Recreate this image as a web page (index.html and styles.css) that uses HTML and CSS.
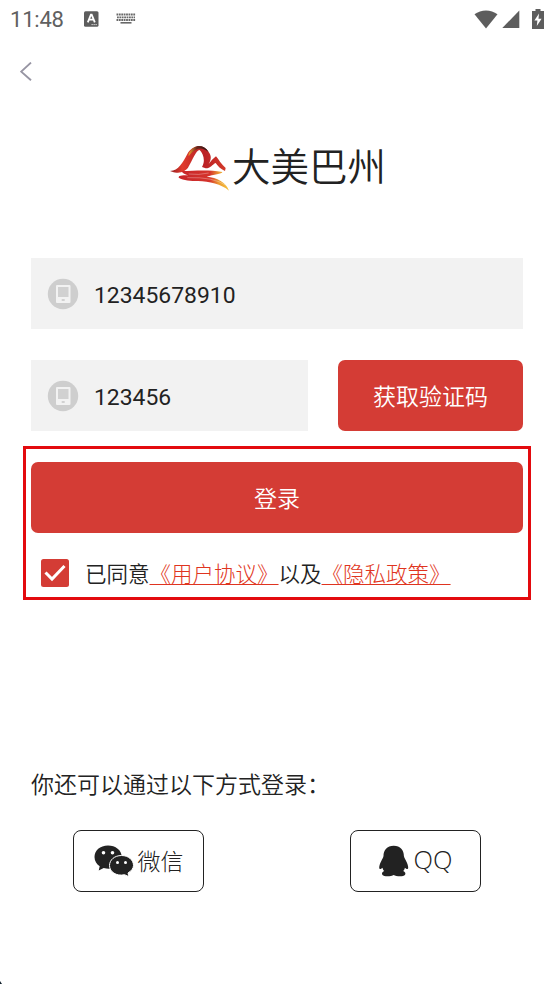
FILE: index.html
```html
<!DOCTYPE html>
<html lang="zh-CN">
<head>
<meta charset="utf-8">
<title>登录</title>
<link rel="stylesheet" href="styles.css">
</head>
<body>
<main class="screen">
  <header class="status">
    <span class="clock">11:48</span>
    <svg class="ime" width="15" height="16" viewBox="0 0 15 16"><rect y="0.3" width="14.5" height="15.4" rx="1.5" fill="#5d5d5d"/><path d="M3.8 11.3 6.9 3.7h.8l3.1 7.6M5 8.7h4.5" fill="none" stroke="#fff" stroke-width="1.8"/><path d="M7.5 13.6h5.5" stroke="#ddd" stroke-dasharray="1.3 .7"/></svg>
    <svg class="keyboard" width="20" height="12" viewBox="0 0 20 12" fill="none" stroke="#686868"><path d="M.5 1.5h19" stroke-width="1.8" stroke-dasharray="1.8 .6"/><path d="M1 4.3h18" stroke-width="1.8" stroke-dasharray="1.8 .6"/><path d="M.5 7h19" stroke-width="1.8" stroke-dasharray="1.8 .6"/><path d="M4.5 9.8h11" stroke-width="1.6"/></svg>
    <span class="spacer"></span>
    <svg class="wifi" width="24" height="19" viewBox="0 0 24 19"><path d="M.5 4.3C7-.8 17-.8 23.5 4.3L12 18.5Z" fill="#5d5d5d"/></svg>
    <svg class="signal" width="18" height="18" viewBox="0 0 18 18"><path d="M17.3.5V18H.3Z" fill="#5d5d5d"/></svg>
    <svg class="battery" width="12" height="20" viewBox="0 0 12 20"><path d="M3.5 0h5v2H12v18H0V2h3.5Z" fill="#5d5d5d"/><path d="M7 4.5 2.4 11.5h3L4.8 17l4.8-7.3H6.5Z" fill="#fff"/></svg>
  </header>
  <nav class="nav"><svg width="12" height="20" viewBox="0 0 12 20"><path d="M11 .6 1.200 9.600 11 18.300" fill="none" stroke="#9795a3" stroke-width="1.9"/></svg></nav>

  <div class="brand">
    <svg class="mountain" width="60" height="47" viewBox="30 29 180 141">
      <defs>
        <linearGradient id="ridge" x1="0" x2="1"><stop offset="0" stop-color="#8f1d20"/><stop offset=".22" stop-color="#e23a2d"/><stop offset=".4" stop-color="#c92e29"/><stop offset=".62" stop-color="#bb2025"/><stop offset="1" stop-color="#d33a2a"/></linearGradient>
        <linearGradient id="river" x1="0" x2="1"><stop offset="0" stop-color="#c6242a"/><stop offset=".62" stop-color="#d5342c"/><stop offset=".8" stop-color="#ec9b31"/><stop offset="1" stop-color="#f5c43b"/></linearGradient>
        <linearGradient id="gold" x1="0" x2="1"><stop offset="0" stop-color="#f1a22d"/><stop offset=".4" stop-color="#6d271d"/><stop offset="1" stop-color="#241514"/></linearGradient>
      </defs>
      <path d="M30 107C56 106 68 82 82 56 95 32 128 22 146 50 158 66 150 78 146 86 152 78 160 69 168 63 176 72 184 88 197 98L195 107C181 101 174 92 167 83 157 87 152 99 137 99L126 95C137 75 130 56 119 44 107 46 99 72 84 97 74 112 49 114 41 111Z" fill="url(#ridge)"/>
      <path d="M86 55C100 27 130 24 146 50 132 39 121 36 108 43 98 47 91 56 86 63Z" fill="url(#gold)"/>
      <path d="M66 107C101 107 143 102 187 110 187 116 160 118 140 124 170 126 200 142 207 166 184 146 148 138 114 137 92 137 71 136 56 127 56 121 62 120 86 120 74 117 66 113 66 107Z" fill="url(#river)"/>
      <path d="M82 127Q160 124 200 151M86 116Q116 120 146 113" fill="none" stroke="#fff" stroke-width="1.5" opacity=".6"/>
    </svg>
    <h1 class="brand-name">大美巴州</h1>
  </div>

  <form class="form">
    <div class="field">
      <svg class="device" width="32" height="32" viewBox="0 0 32 32"><circle cx="16" cy="16" r="15.2" fill="#cecece"/><rect x="9" y="7" width="14.5" height="18" rx="1" fill="#f2f2f2"/><path d="M11 9h10.5v10H11Z" fill="#d1d1d1"/><path d="M14.7 22h3" stroke="#c6c6c6" stroke-width="1.5"/></svg>
      <span class="digits">12345678910</span>
    </div>
    <div class="code-row">
      <div class="field">
        <svg class="device" width="32" height="32" viewBox="0 0 32 32"><circle cx="16" cy="16" r="15.2" fill="#cecece"/><rect x="9" y="7" width="14.5" height="18" rx="1" fill="#f2f2f2"/><path d="M11 9h10.5v10H11Z" fill="#d1d1d1"/><path d="M14.7 22h3" stroke="#c6c6c6" stroke-width="1.5"/></svg>
        <span class="digits">123456</span>
      </div>
      <button class="btn" type="button">获取验证码</button>
    </div>
    <section class="frame">
      <button class="btn" type="button">登录</button>
      <div class="agree">
        <svg class="check" width="28" height="28" viewBox="0 0 28 28"><rect width="28" height="28" rx="2.5" fill="#d43c35"/><path d="M4.5 13.5 11 20 23.5 7" fill="none" stroke="#fff" stroke-width="3"/></svg>
        <p class="terms">已同意<a class="link">《用户协议》</a>以及<a class="link">《隐私政策》</a></p>
      </div>
    </section>
  </form>

  <section class="other">
    <p class="other-title">你还可以通过以下方式登录：</p>
    <div class="providers">
      <button class="provider" type="button">
        <svg class="wechat" width="40" height="32" viewBox="0 0 40 32"><path d="M14 .5C6 .5.5 5.5.5 12c0 4 2 7 5.2 9.2L4.7 25.5l5-2.5c10 2.5 18-2.5 18-11C27.700 5 21.500.5 14 .5Z" fill="#222"/><path d="M27.500 10.500c-7 0-12 4.500-12 10 0 6.500 7 11 15 9.200l4.500 2-1-3.700c3.200-2 5.500-4.500 5.500-7.500 0-5.500-5-10-12-10Z" fill="#222" stroke="#fff"/><g fill="#fff"><circle cx="9.500" cy="7.800" r="1.800"/><circle cx="18.500" cy="7.800" r="1.800"/><circle cx="23.500" cy="17.500" r="1.500"/><circle cx="31.500" cy="17.500" r="1.500"/></g></svg>
        <span class="wechat-name">微信</span>
      </button>
      <button class="provider" type="button">
        <svg class="penguin" width="30" height="32" viewBox="0 0 30 32"><path d="M14.700.7C8 .7 4.500 5 4.500 11c-.2 2-1.500 3-2.200 5C.5 19.500-.5 23.500.8 24c1 .3 2-.8 2.700-1.300.3 1.500.9 2.500 1.800 3.300C3 27 2.500 28.500 3.500 30c1.500 2 9 1.500 11.200 0 2.200 1.500 9.700 2 11.200 0 1-1.500.5-3-1.800-4 .9-.8 1.500-1.800 1.800-3.300.7.500 1.700 1.600 2.700 1.300 1.300-.5.300-4.500-1.500-8-.7-2-2-3-2.200-5 0-6-3.500-10.300-10.200-10.300Z" fill="#222"/></svg>
        <span class="qq-name">QQ</span>
      </button>
    </div>
  </section>
  <div class="corner"></div>
</main>
</body>
</html>
```
FILE: styles.css
```css
* { box-sizing: border-box; }

body {
  margin: 0;
  background: #fff;
  color: #222;
  font-family: Roboto, "Noto Sans CJK SC", sans-serif;
}

svg { display: block; flex: none; }

.screen {
  display: flex;
  flex-direction: column;
  height: 984px;
  overflow: hidden;
  background: #fff;
}

.status {
  display: flex;
  align-items: center;
  height: 38px;
  padding: 0 10px;
}

.clock {
  width: 74px;
  padding-top: 1px;
  color: #606060;
  font-size: 22px;
  line-height: 37px;
  letter-spacing: -0.2px;
}

.keyboard { margin-left: 17px; }
.spacer { flex: 1; }
.signal { margin-left: 4px; }
.battery { margin-left: 12px; }

.nav {
  height: 107px;
  padding: 24px 20px;
}

.brand {
  display: flex;
  height: 113px;
  padding-left: 170px;
}

.brand-name {
  margin: -5px 0 0 2px;
  font-size: 38.5px;
  font-weight: 350;
  line-height: 56px;
}

.form { padding: 0 31px; }

.field {
  display: flex;
  align-items: center;
  gap: 15px;
  height: 71px;
  padding: 2px 16px 0;
  background: #f2f2f2;
  font-size: 22.9px;
}

.device { margin-top: -2px; }
.digits { padding-top: 2px; }

.code-row {
  display: grid;
  grid-template-columns: 277px 1fr;
  gap: 30px;
  margin-top: 31px;
}

.btn {
  display: block;
  width: 100%;
  height: 71px;
  padding: 0;
  border: 0;
  border-radius: 7px;
  background: #d43c35;
  color: #fff;
  font: 350 23px/71px "Noto Sans CJK SC", sans-serif;
}

.frame {
  height: 154px;
  margin: 15px -8px 0;
  padding: 13px 5px 0;
  border: 3px solid #e30a0e;
}

.agree {
  display: flex;
  align-items: center;
  margin: 26px 0 0 10px;
}

.terms {
  margin: 0 0 0 16px;
  font: 350 21.5px/28px "Noto Sans CJK SC", sans-serif;
  white-space: nowrap;
}

.link {
  color: #df3420;
  font-weight: 300;
  text-decoration: underline;
  text-decoration-thickness: 1px;
  text-underline-offset: 2px;
}

.other { padding: 165px 73px 0; }

.other-title {
  margin: 0 0 0 -42px;
  font: 350 23px/36px "Noto Sans CJK SC", sans-serif;
  white-space: nowrap;
}

.providers {
  display: flex;
  justify-content: space-between;
  margin-top: 29px;
}

.provider {
  display: flex;
  align-items: center;
  justify-content: center;
  gap: 4px;
  width: 131px;
  height: 62px;
  padding: 0;
  border: 1px solid #222;
  border-radius: 8px;
  background: #fff;
  color: #222;
  font: 300 23px/60px "Noto Sans CJK SC", sans-serif;
}

.wechat-name { margin-top: -3px; }

.qq-name {
  margin: -4px 0 0 1px;
  font-family: "Open Sans", sans-serif;
  font-size: 25.5px;
}

.corner {
  width: 2px;
  height: 3px;
  margin-top: auto;
  background: #12202c;
  clip-path: polygon(0 0, 100% 100%, 0 100%);
}
```
